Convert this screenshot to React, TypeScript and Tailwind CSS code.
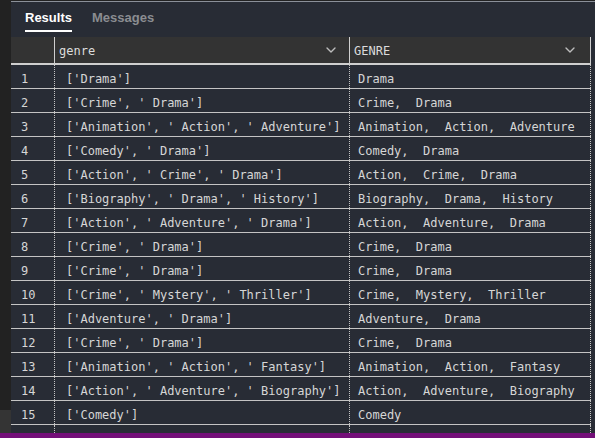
import { ChevronDown } from 'lucide-react';

// Query result grid: genre (raw list) vs GENRE (joined)
const ROWS: [string, string][] = [
  ["['Drama']", 'Drama'],
  ["['Crime', ' Drama']", 'Crime,  Drama'],
  ["['Animation', ' Action', ' Adventure']", 'Animation,  Action,  Adventure'],
  ["['Comedy', ' Drama']", 'Comedy,  Drama'],
  ["['Action', ' Crime', ' Drama']", 'Action,  Crime,  Drama'],
  ["['Biography', ' Drama', ' History']", 'Biography,  Drama,  History'],
  ["['Action', ' Adventure', ' Drama']", 'Action,  Adventure,  Drama'],
  ["['Crime', ' Drama']", 'Crime,  Drama'],
  ["['Crime', ' Drama']", 'Crime,  Drama'],
  ["['Crime', ' Mystery', ' Thriller']", 'Crime,  Mystery,  Thriller'],
  ["['Adventure', ' Drama']", 'Adventure,  Drama'],
  ["['Crime', ' Drama']", 'Crime,  Drama'],
  ["['Animation', ' Action', ' Fantasy']", 'Animation,  Action,  Fantasy'],
  ["['Action', ' Adventure', ' Biography']", 'Action,  Adventure,  Biography'],
  ["['Comedy']", 'Comedy'],
];

const mono = "font-['DejaVu_Sans_Mono','Liberation_Mono',monospace]";

export default function App() {
  return (
    <div className="flex h-[438px] w-[595px] flex-col overflow-hidden bg-[#222222]">
      <div className="flex min-h-0 flex-1">
        {/* left gutter */}
        <div className="flex w-[11px] shrink-0 flex-col">
          <div className="flex-1 bg-[#222222]" />
          <div className="h-[23px] bg-[#343434]" />
        </div>

        <div className="flex min-w-0 flex-1 flex-col pt-px">
          <div className="flex flex-1 flex-col border-t border-[#8b9099] bg-[#282c35]">
            {/* tabs */}
            <div className="flex h-[35px] shrink-0 items-start gap-[20px] pl-[14px] pt-[8px] font-['Liberation_Sans',Arial,sans-serif] text-[13px] font-bold leading-[16px]">
              <div className="flex flex-col">
                <span className="text-white">Results</span>
                <span className="mt-[4px] h-[2px] bg-white" />
              </div>
              <span className="text-[#8b8d91]">Messages</span>
            </div>

            {/* grid */}
            <div className={`flex w-[580px] flex-1 flex-col text-[12px] ${mono}`}>
              <div className="flex h-[28px] shrink-0 border-b-2 border-[#cfcfcf] bg-[#333333] text-[#dcdcdc]">
                <div className="w-[44px] shrink-0 border-r border-[#cfcfcf]" />
                <div className="flex w-[295px] shrink-0 items-center justify-between border-r border-[#cfcfcf] pl-[4px] pr-[10px]">
                  <span className="pt-[2px]">genre</span>
                  <ChevronDown size={16} strokeWidth={2} className="text-[#bdbdbd]" />
                </div>
                <div className="flex w-[241px] shrink-0 items-center justify-between border-r border-[#cfcfcf] pl-[4px] pr-[12px]">
                  <span className="pt-[2px]">GENRE</span>
                  <ChevronDown size={16} strokeWidth={2} className="text-[#bdbdbd]" />
                </div>
              </div>

              {ROWS.map(([raw, joined], i) => (
                <div key={i} className="flex h-[24px] shrink-0 border-b border-[#c4c4c4] text-[#d6d6d6]">
                  <div className="flex w-[44px] shrink-0 items-center border-r border-dotted border-[#c4c4c4] pl-[10px] pt-[5px]">
                    {i + 1}
                  </div>
                  <div className="flex w-[295px] shrink-0 items-center whitespace-pre border-r border-dotted border-[#c4c4c4] pl-[11px] pt-[5px]">
                    {raw}
                  </div>
                  <div className="flex w-[241px] shrink-0 items-center whitespace-pre border-r border-dotted border-[#c4c4c4] pl-[8px] pt-[5px]">
                    {joined}
                  </div>
                </div>
              ))}

              <div className="flex flex-1">
                <div className="w-[44px] shrink-0 border-r border-dotted border-[#c4c4c4]" />
                <div className="w-[295px] shrink-0 border-r border-dotted border-[#c4c4c4]" />
                <div className="w-[241px] shrink-0 border-r border-dotted border-[#c4c4c4]" />
              </div>
            </div>
          </div>
        </div>
      </div>
      <div className="h-[5px] shrink-0 bg-[#730f78]" />
    </div>
  );
}
